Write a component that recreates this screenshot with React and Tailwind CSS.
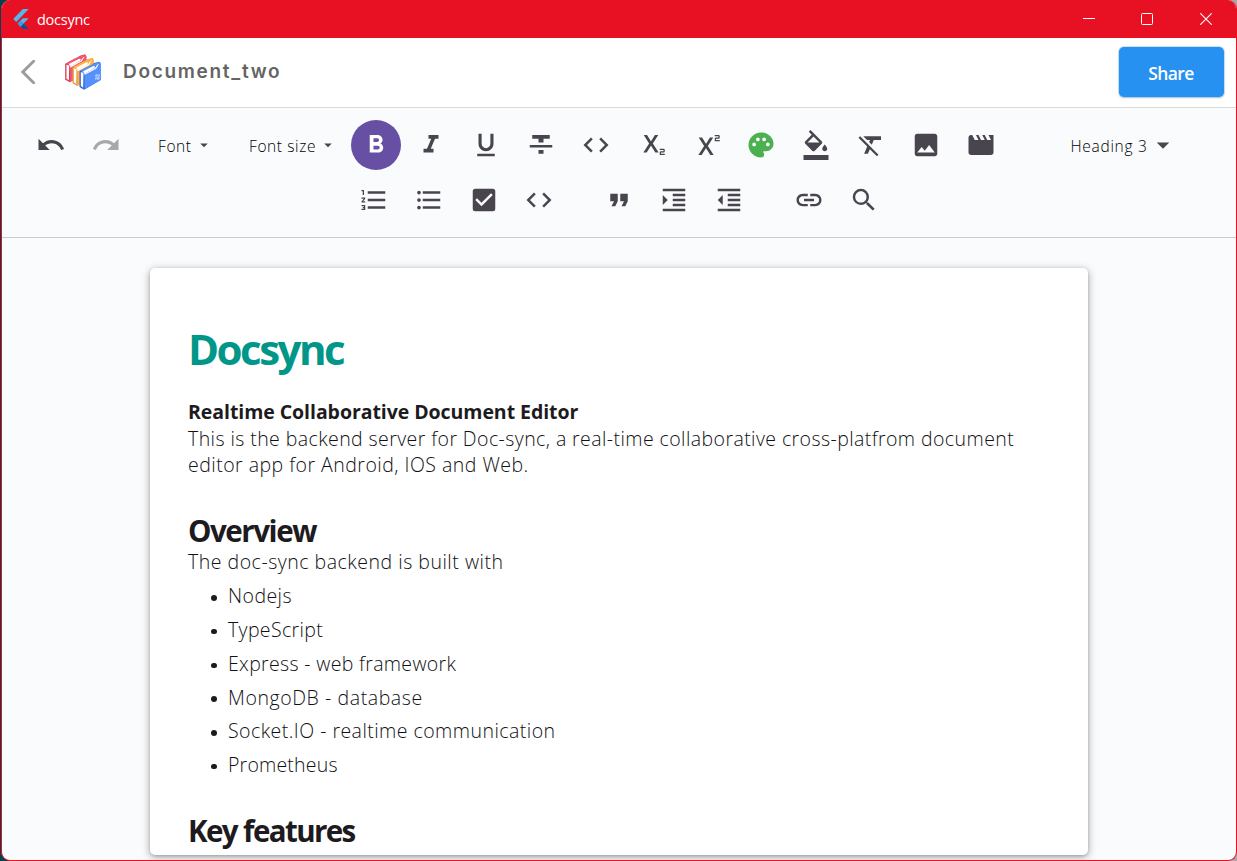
import {
  MdArrowDropDown, MdCheckBox, MdCode, MdFormatBold, MdFormatClear, MdFormatColorFill,
  MdFormatIndentDecrease, MdFormatIndentIncrease, MdFormatItalic, MdFormatListBulleted,
  MdFormatListNumbered, MdFormatQuote, MdFormatStrikethrough, MdFormatUnderlined, MdImage,
  MdLink, MdMovie, MdPalette, MdRedo, MdSearch, MdSubscript, MdSuperscript, MdUndo,
} from 'react-icons/md';

function FlutterLogo() {
  return (
    <svg width="16" height="20" viewBox="2 0 20 24" preserveAspectRatio="none">
      <path d="M14.3 0L2.3 12 6 15.7 21.7 0z" fill="#54b9ea" />
      <path d="M14.3 11h7.4l-6.6 6.5-3.6 3.7-3.7-3.7z" fill="#54b9ea" />
      <path d="M11.5 21.2l3.6-3.7L21.7 24h-7.4z" fill="#12508f" />
      <path d="M7.8 17.5l3.7-3.7 3.6 3.7-3.6 3.7z" fill="#2fa0dd" />
    </svg>
  );
}

function Folder({ x, y, cover, edge }) {
  return (
    <g transform={`translate(${x} ${y})`}>
      <path d="M0 28L38 9l6-5 16-4 3 5v50L14 84 0 76z" fill={edge} />
      <path d="M3 27L30 12l14-6 8 2-4 8-34 20z" fill={cover} />
      <path d="M11 29L42 13l5 2-3 5-29 17z" fill="#fff" />
      <path d="M42 10l6-6 12-3 3 3-8 8-6 3z" fill={cover} />
      <path d="M15 36L48 19l6-9 10-5v50L15 83z" fill={cover} />
      <path d="M46 19l9-11 3-1-8 14-31 17-4 2v-4z" fill="#fff" />
      <path d="M4 31l8 3-1 44-7-5z" fill="#fff" />
    </g>
  );
}

function FoldersLogo() {
  return (
    <svg width="37" height="36" viewBox="195 163 110 108">
      <Folder x={195} y={164} cover="#ee5a70" edge="#d63f58" />
      <Folder x={217} y={175} cover="#ffb14a" edge="#ec9a35" />
      <Folder x={238} y={186} cover="#5591fb" edge="#2f5fd8" />
      <path d="M285 226l5-3 3 3 6-3v6l-3 3 3 2-1 4-5 3-2-3-6 2v-5l3-3-3-2z" fill="#bcd4ff" />
      <path d="M288 227l7 9M295 227l-7 9" stroke="#5591fb" strokeWidth="2" />
    </svg>
  );
}

function Tool({ icon: Icon, className = 'text-[#48454e]' }) {
  return (
    <button className={`flex size-[50px] shrink-0 items-center justify-center rounded-full ${className}`}>
      <Icon size={30} />
    </button>
  );
}

function Picker({ label, arrow = 18, className }) {
  return (
    <div className={`flex h-[50px] items-center justify-between text-[15.5px] font-light text-black ${className}`}>
      <span className="pt-[4px] whitespace-nowrap">{label}</span>
      <MdArrowDropDown size={arrow} className="shrink-0 text-[#48454e]" />
    </div>
  );
}

const formatTools = [MdFormatItalic, MdFormatUnderlined, MdFormatStrikethrough, MdCode, MdSubscript, MdSuperscript];
const stack = [
  ['Nodejs', 'tracking-[0.45px]'],
  ['TypeScript', 'tracking-[0.35px]'],
  ['Express - web framework', 'tracking-[0.33px]'],
  ['MongoDB - database', 'tracking-[0.58px]'],
  ['Socket.IO - realtime communication', 'tracking-[0.46px]'],
  ['Prometheus', 'tracking-[0.2px]'],
];

function TitleBar() {
  return (
    <div className="flex h-[38px] shrink-0 items-center bg-[#e81123] pl-[11px] text-white">
      <FlutterLogo />
      <span className="ml-[8px] pt-[1px] text-[14.5px] tracking-[-0.25px]">docsync</span>
      <div className="ml-auto flex">
        <span className="flex w-[58px] items-center justify-center">
          <svg width="12" height="12"><path d="M0 5.5h12" stroke="#fff" /></svg>
        </span>
        <span className="flex w-[58px] items-center justify-center">
          <svg width="12" height="12"><rect x=".5" y=".5" width="11" height="11" rx="1" fill="none" stroke="#fff" /></svg>
        </span>
        <span className="flex w-[60px] items-center justify-center">
          <svg width="12" height="12"><path d="M.3.3l11.4 11.4M11.7.3L.3 11.7" stroke="#fff" strokeWidth="1.1" /></svg>
        </span>
      </div>
    </div>
  );
}

function Header() {
  return (
    <header className="flex h-[70px] shrink-0 items-center border-b border-[#dadbdd] bg-white pr-[12.5px] pl-[18px]">
      <svg width="16" height="24" viewBox="0 0 16 24" fill="none" stroke="#9d9d9d" strokeWidth="3" className="mb-[2px]">
        <path d="M13.6 1.2L2.8 12l10.8 10.8" strokeLinecap="round" />
      </svg>
      <div className="mb-[1px] ml-[29px]"><FoldersLogo /></div>
      <h1 className="ml-[21px] font-['Inter'] text-[19px] font-semibold tracking-[1.7px] text-[#646464]">Document_two</h1>
      <button className="mb-[0.5px] ml-auto flex h-[50px] w-[105px] items-center justify-center rounded-[5px] bg-[#2691f0] pt-[2px] text-[17.5px] font-semibold tracking-[-0.6px] text-white shadow-[0_0_1px_1px_#5ba9ee55,0_1px_2px_#0003]">
        Share
      </button>
    </header>
  );
}

function Toolbar() {
  return (
    <div className="h-[130px] shrink-0 border-b border-[#c9cbce] pt-[12px] pl-[23.5px]">
      <div className="flex gap-[5px]">
        <Tool icon={MdUndo} />
        <Tool icon={MdRedo} className="text-[#a8a7aa]" />
        <Picker label="Font" className="ml-[22.5px] w-[54.5px] tracking-[0.6px]" />
        <Picker label="Font size" className="ml-[31.5px] w-[88px] tracking-[0.6px]" />
        <Tool icon={MdFormatBold} className="ml-[8.5px] bg-[#6750a4] text-white" />
        {formatTools.map((icon, i) => <Tool key={i} icon={icon} />)}
        <Tool icon={MdPalette} className="text-[#4caf50]" />
        <Tool icon={MdFormatColorFill} />
        <Tool icon={MdFormatClear} />
        <Tool icon={MdImage} />
        <Tool icon={MdMovie} />
        <Picker label="Heading 3" arrow={30} className="ml-[60px] w-[107px] tracking-[0.7px]" />
      </div>
      <div className="mt-[5px] flex gap-[5px] pl-[323px]">
        <Tool icon={MdFormatListNumbered} />
        <Tool icon={MdFormatListBulleted} />
        <Tool icon={MdCheckBox} />
        <Tool icon={MdCode} />
        <div className="ml-[25px] flex gap-[5px]">
          <Tool icon={MdFormatQuote} />
          <Tool icon={MdFormatIndentIncrease} />
          <Tool icon={MdFormatIndentDecrease} />
        </div>
        <div className="ml-[25px] flex gap-[5px]">
          <Tool icon={MdLink} />
          <Tool icon={MdSearch} />
        </div>
      </div>
    </div>
  );
}

function Page() {
  return (
    <article className="mt-[30px] ml-[148px] h-[587px] w-[938px] overflow-hidden rounded-[5px] bg-white px-[38px] pt-[55px] text-[19.5px] leading-[26.6px] font-light whitespace-nowrap text-[#111013] shadow-[0_2px_8px_rgba(0,0,0,0.35),0_1px_3px_rgba(0,0,0,0.15)]">
      <h1 className="h-[52px] text-[42px] leading-[52px] font-bold tracking-[-2.5px] text-[#009688]">Docsync</h1>
      <h3 className="mt-[24px] font-bold tracking-[-0.06px] text-[#1d1b20]">Realtime Collaborative Document Editor</h3>
      <p className="tracking-[0.42px]">This is the backend server for Doc-sync, a real-time collaborative cross-platfrom document</p>
      <p className="tracking-[0.48px]">editor app for Android, IOS and Web.</p>
      <h2 className="mt-[34.5px] text-[29.5px] leading-[36px] font-bold tracking-[-1.45px] text-[#1d1b20]">Overview</h2>
      <p className="tracking-[0.51px]">The doc-sync backend is built with</p>
      <ul className="mt-[3.5px] leading-[33.75px]">
        {stack.map(([text, spacing]) => (
          <li key={text} className="flex items-center">
            <span className="mt-[3px] ml-[23px] size-[5.5px] rounded-full bg-[#1d1b20]" />
            <span className={`ml-[11.5px] ${spacing}`}>{text}</span>
          </li>
        ))}
      </ul>
      <h2 className="mt-[31.5px] text-[29.5px] leading-[36px] font-bold tracking-[-1.6px] text-[#1d1b20]">Key features</h2>
    </article>
  );
}

export default function App() {
  return (
    <div className="h-[861px] w-[1237px] bg-linear-to-r from-[#06404f] via-[#3a4a50] to-[#a9a4a6] pl-[1px] font-['Open_Sans',sans-serif]">
      <div className="flex h-[861px] flex-col overflow-hidden rounded-[9px] border border-t-0 border-[#e81123] bg-[#fafbfd]">
        <TitleBar />
        <Header />
        <Toolbar />
        <main className="min-h-0 flex-1 overflow-hidden">
          <Page />
        </main>
      </div>
    </div>
  );
}
